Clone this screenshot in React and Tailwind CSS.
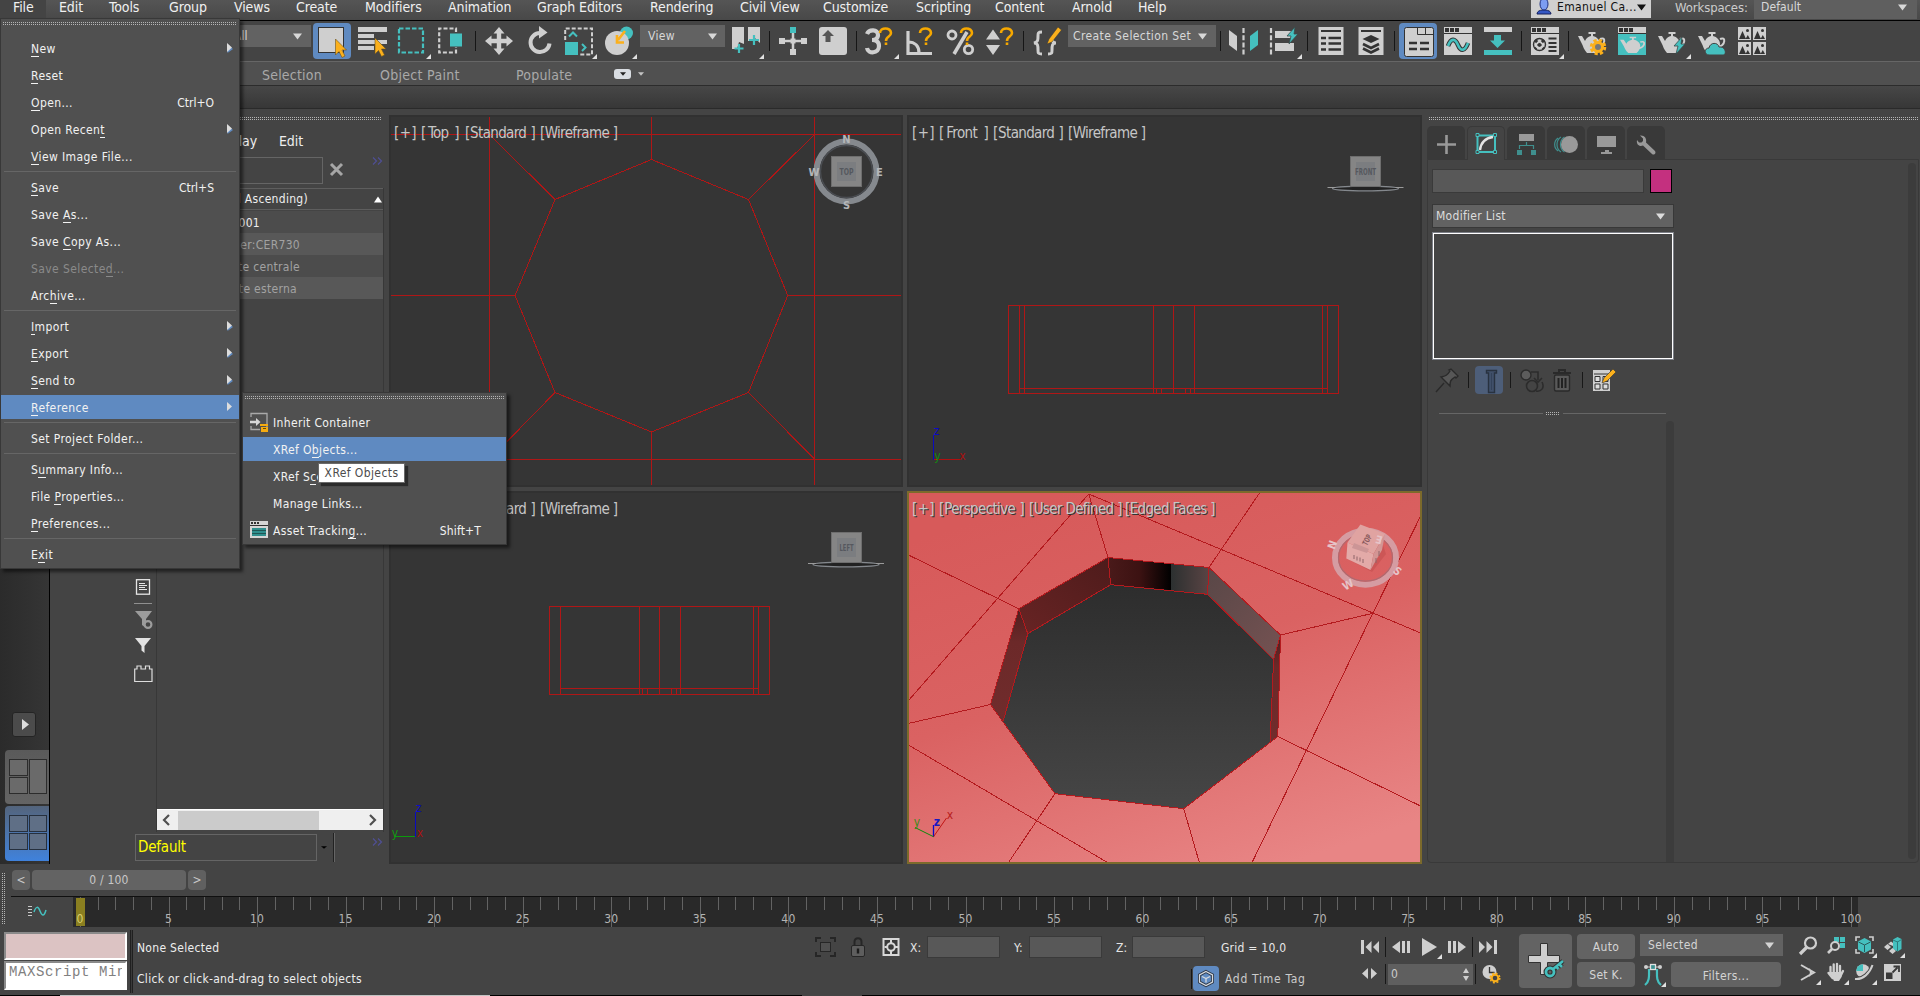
import React from "react";

const L = "#cfcfcf";
const T = "#45c0bf";
const O = "#fbb01c";
const D = "#333333";

/* ---------- small shared parts ---------- */

const Grip = ({ className = "" }) => (
  <div className={`flex shrink-0 flex-col gap-px ${className}`}>
    <div className="h-px bg-[repeating-linear-gradient(90deg,#b4b4b4_0_1px,transparent_1px_2px)]" />
    <div className="h-px bg-[repeating-linear-gradient(90deg,#b4b4b4_0_1px,transparent_1px_2px)]" />
  </div>
);

const Cell = ({ className = "", children }) => (
  <svg className={`block shrink-0 overflow-visible ${className}`} fill="none">
    {children}
  </svg>
);

const Down = ({ className = "", size = "h-[7px] w-[9px]" }) => (
  <svg className={`block shrink-0 ${size} ${className}`} viewBox="0 0 9 7" preserveAspectRatio="none">
    <path d="M0 .5h9L4.500 6.500z" fill="currentColor" />
  </svg>
);

const Sep = ({ className = "" }) => (
  <Cell className={`h-9 ${className}`}>
    <path d="M.5 8v20" stroke="#161616" />
  </Cell>
);

const Fly = ({ x, y }) => <path d={`M${x} ${y}v-5l-5 5z`} fill="#e0e0e0" />;

const Mn = ({ text }) => {
  const i = text.indexOf("&");
  if (i < 0) return <>{text}</>;
  return (
    <>
      {text.slice(0, i)}
      <span className="border-b border-current">{text[i + 1]}</span>
      {text.slice(i + 2)}
    </>
  );
};

/* ---------- menu bar ---------- */

const menuBar = [
  ["Edit", "w-[50px]"],
  ["Tools", "w-[60px]"],
  ["Group", "w-[65px]"],
  ["Views", "w-[62px]"],
  ["Create", "w-[69px]"],
  ["Modifiers", "w-[83px]"],
  ["Animation", "w-[89px]"],
  ["Graph Editors", "w-[113px]"],
  ["Rendering", "w-[90px]"],
  ["Civil View", "w-[83px]"],
  ["Customize", "w-[93px]"],
  ["Scripting", "w-[79px]"],
  ["Content", "w-[77px]"],
  ["Arnold", "w-[66px]"],
  ["Help", "w-[393px]"],
];

const MenuBar = () => (
  <div className="flex h-[21px] shrink-0 overflow-hidden border-b border-black bg-linear-to-b from-[#555555] to-[#484848] text-[14px] leading-[14px] tracking-[-0.1px] text-[#f0f0f0]">
    <div className="h-[19px] w-[46px] bg-[#444444] pl-[13px]">File</div>
    <div className="w-[13px]" />
    {menuBar.map(([t, w]) => (
      <div key={t} className={`shrink-0 whitespace-nowrap ${w}`}>
        {t}
      </div>
    ))}
    <div className="flex h-[18px] w-[120px] shrink-0 bg-[#d0d0d0] pl-[5px] text-[12px] leading-[15px] tracking-[0.35px] text-[#111111]">
      <Cell className="h-[18px] w-[21px]">
        <path d="M1 14c0-3 3-3.500 5-4h4c2 .5 5 1 5 4z" fill="#3457c4" stroke="#14205c" />
        <ellipse cx="8" cy="4" rx="4" ry="6" fill="#7c9df2" stroke="#1c2f80" />
      </Cell>
      <span className="w-[80px] whitespace-nowrap">Emanuel Ca...</span>
      <Down className="mt-[4px]" />
    </div>
    <div className="w-[79px] shrink-0 pl-[24px] text-[13px] leading-[15px] tracking-[-0.1px] text-[#cccccc]">
      <span className="whitespace-nowrap">Workspaces:</span>
    </div>
    <div className="ml-[24px] flex h-[19px] w-[163px] shrink-0 justify-between bg-[#5f5f5f] pr-[10px] pl-[7px] text-[12px] leading-[15px] tracking-[0.1px] text-[#d8d8d8]">
      Default
      <Down className="mt-[4px]" />
    </div>
  </div>
);

/* ---------- main toolbar ---------- */

const Question = ({ x, y }) => (
  <g transform={`translate(${x} ${y})`} stroke="#f6a800" strokeWidth="2.600">
    <path d="M2 6c0-6 11-6 11 0 0 4-5 3-5 8" />
    <path d="M8 15.500v2.500" />
  </g>
);

const Cursor = ({ x, y }) => (
  <path
    transform={`translate(${x} ${y})`}
    d="M0 0l11 11H6.500l3 6-3 1.500-3-6L0 16z"
    fill={O}
    stroke="#6a5320"
    strokeWidth=".6"
  />
);

const Teapot = ({ fill = L }) => (
  <>
    <path d="M22 13c6-3 6 6-2 8" stroke={fill} strokeWidth="2" />
    <path
      d="M0 10h4l3 5c1-3 4-4.500 6-5V8h-2.500V6h7v2H15v2c4 1 7 4 7 8 0 4-2 7-4 9H9c-3-3-4-7-5-9z"
      fill={fill}
    />
  </>
);

const Bolt = ({ x, y }) => (
  <path
    transform={`translate(${x} ${y})`}
    d="M8 0L0 9h4L2 17l9-10H7z"
    fill={T}
    stroke="#3a4a4a"
    strokeWidth=".8"
  />
);

const MainToolbar = () => (
  <div className="flex h-[41px] shrink-0 overflow-hidden border-b border-[#666666] bg-[#444444] pt-[2px] pl-[190px]">
    <div className="mt-[2px] flex h-[22px] w-[121px] shrink-0 items-center justify-between bg-[#626262] pr-[9px] pl-[44px] text-[12px] text-[#d8d8d8]">
      All
      <Down />
    </div>
    <div className="ml-[2px] h-9 w-[38px] shrink-0 rounded-[4px] bg-[#5f8ac1]">
      <Cell className="h-9 w-[38px]">
        <rect x="5.500" y="4.500" width="25" height="25" fill={L} stroke={D} />
        <Cursor x={22.500} y={16} />
      </Cell>
    </div>
    <Cell className="ml-[6px] h-9 w-[40px]">
      <path d="M1 4h29v5H1zM1 11h16v4H1zM1 17h29v4H1zM1 23h16v4H1z" fill={L} />
      <Cursor x={18} y={15} />
    </Cell>
    <Cell className="h-9 w-[40px]">
      <rect x="2" y="5.500" width="24" height="24" stroke={T} strokeWidth="2.200" strokeDasharray="4.500 2" />
      <Fly x={34} y={36} />
    </Cell>
    <Cell className="h-9 w-[38px]">
      <path d="M19 9V5.500H2.200v24H19V24" stroke={L} strokeWidth="2.200" strokeDasharray="4 2" />
      <rect x="13" y="10.500" width="12" height="13" fill={T} />
    </Cell>
    <Sep className="w-[10px]" />
    <Cell className="h-9 w-[41px]">
      <path
        d="M14 4l5.500 6.500h-3.300v5.300H21.500V12.500L28 18l-6.500 5.500v-3.300h-5.300v5.300h3.300L14 32l-5.500-6.500h3.300v-5.300H6.500v3.300L0 18l6.500-5.500v3.300h5.300v-5.300H8.500z"
        fill={L}
      />
    </Cell>
    <Cell className="h-9 w-[38px]">
      <path d="M14 10a9.500 9.500 0 1 0 9.500 10.500" stroke={L} strokeWidth="4" />
      <path d="M13 3l8.500 6.500-8.500 6z" fill={L} />
    </Cell>
    <Cell className="h-9 w-[40px]">
      <path d="M1.200 17V5.500H28v26H16" stroke={L} strokeWidth="2" strokeDasharray="4 2" />
      <rect x="1" y="19" width="13" height="13" fill={T} />
      <path d="M5 13.500l4-4 4 4M18 21l3.500 3.500L18 28" stroke={T} strokeWidth="2" />
      <Fly x={33} y={36} />
    </Cell>
    <Cell className="h-9 w-[36px]">
      <circle cx="22.500" cy="10" r="6.500" fill={T} />
      <circle cx="13" cy="20" r="12" fill={L} />
      <path d="M21 8l-7 9M13 12v7.500h7" stroke={O} strokeWidth="2.600" />
      <Fly x={33} y={36} />
    </Cell>
    <div className="mt-[2px] flex h-[22px] w-[85px] shrink-0 items-center justify-between bg-[#626262] pr-[8px] pl-[8px] text-[12px] tracking-[0.3px] text-[#d8d8d8]">
      View
      <Down />
    </div>
    <Cell className="ml-[6px] h-9 w-[38px]">
      <path d="M1 4h12v17l-5-2-2 7H1zM17 4h12v16l-6-6-2 4h-4z" fill={L} />
      <path d="M8 21v9M3.500 25.500h9M23 12v10M18 17h10" stroke={T} strokeWidth="2.200" />
      <Fly x={33} y={36} />
    </Cell>
    <Sep className="w-[10px]" />
    <Cell className="h-9 w-[39px]">
      <path d="M0 18h28M14 8v24" stroke={L} strokeWidth="2.500" />
      <path d="M0 15h6v6H0zM22 15h6v6h-6zM11 26h6v6h-6zM11.500 15.500h5v5h-5z" fill={L} />
      <rect x="11" y="4" width="6" height="6" fill={T} />
    </Cell>
    <Cell className="h-9 w-[38px]">
      <rect x="1" y="4" width="28" height="28" rx="3" fill={L} />
      <path d="M10 7l6 6h-3.500v6h-5v-6H4z" fill="#555555" />
    </Cell>
    <Sep className="w-[9px]" />
    <Cell className="h-9 w-[40px]">
      <path d="M2 11c2-5 11-5 11 1 0 4-4 5-6 5 3 0 7 1 7 6 0 8-11 8-12 2" stroke={L} strokeWidth="4.200" />
      <Question x={13} y={4} />
      <Fly x={34} y={36} />
    </Cell>
    <Cell className="h-9 w-[41px]">
      <path d="M3 8v22.500h24M3 19c7 0 11 4 11 11" stroke={L} strokeWidth="3.200" />
      <Question x={13} y={4} />
    </Cell>
    <Cell className="h-9 w-[40px]">
      <circle cx="6" cy="12" r="4" stroke={L} strokeWidth="2.800" />
      <circle cx="22.500" cy="26.500" r="4.200" stroke={L} strokeWidth="2.800" />
      <path d="M21 9L8 31" stroke={L} strokeWidth="3.500" />
      <Question x={13} y={4} />
    </Cell>
    <Cell className="h-9 w-[37px]">
      <path d="M7 6.500l7 10H0zM0 22h14L7 32z" fill={L} />
      <Question x={13} y={4} />
    </Cell>
    <Sep className="w-[10px]" />
    <Cell className="h-9 w-[35px]">
      <path
        d="M9 9c-4 0-4 1-4 4 0 4 0 6-4 7 4 0 4 3 4 7 0 3 0 4 4 4M15 31c4 0 4-1 4-4 0-4 0-7 4-7-4 0-4-3-4-5"
        stroke={L}
        strokeWidth="3"
      />
      <path d="M14 21l2-5L25 4l3.500 3L19 19z" fill={O} stroke={D} strokeWidth=".5" />
    </Cell>
    <div className="mt-[2px] flex h-[22px] w-[148px] shrink-0 items-center justify-between bg-[#626262] pr-[9px] pl-[5px] text-[12px] tracking-[0.4px] text-[#d8d8d8]">
      <span className="whitespace-nowrap">Create Selection Set</span>
      <Down />
    </div>
    <Sep className="ml-[4px] w-[9px]" />
    <Cell className="h-9 w-[41px]">
      <path d="M0 7l8 6v15l-8-6z" fill={L} />
      <path d="M14.500 5v27" stroke={L} strokeWidth="2.200" strokeDasharray="5 2.200" />
      <path d="M29 7l-8 6v15l8-6z" fill={T} />
    </Cell>
    <Cell className="h-9 w-[37px]">
      <path d="M1 5v27" stroke={L} strokeWidth="2.200" strokeDasharray="5 2.200" />
      <path d="M5 8h18v7H5zM5 20h19v8H5z" fill={L} />
      <Bolt x={17} y={4} />
      <Fly x={32} y={36} />
    </Cell>
    <Sep className="w-[11px]" />
    <Cell className="h-9 w-[40px]">
      <rect x=".5" y="4" width="25" height="28" fill={L} />
      <path d="M3 8h20" stroke={D} strokeWidth="2" />
      <path d="M3 15h5M3 20.500h5M3 26.500h5M10.500 15H23M10.500 20.500H23M10.500 26.500H23" stroke={D} strokeWidth="2.600" />
    </Cell>
    <Cell className="h-9 w-[36px]">
      <rect x=".5" y="4" width="25" height="28" fill={L} />
      <path d="M3 8h20" stroke={D} strokeWidth="2" />
      <path d="M13 12l8.500 4-8.500 4-8.500-4z" fill={D} />
      <path d="M5 21l8 4 8-4M5 25.500l8 4 8-4" stroke={D} strokeWidth="2.600" />
    </Cell>
    <Sep className="w-[5px]" />
    <div className="h-9 w-[38px] shrink-0 rounded-[4px] bg-[#5f8ac1]">
      <Cell className="h-9 w-[38px]">
        <rect x="5.500" y="4.500" width="29" height="29" rx="2" fill={L} stroke={D} />
        <path d="M18.500 5v6.500h16M26.500 5v6" stroke={D} />
        <path d="M10 20h8M21 20h9M10 26h8M21 26h9" stroke={D} strokeWidth="2.600" />
      </Cell>
    </div>
    <Cell className="ml-[7px] h-9 w-[39px]">
      <rect x="0" y="4" width="28" height="28" fill={L} />
      <path d="M1 5h4v4H1zM6 5h4v4H6zM11 5h4v4h-4z" fill={D} />
      <path d="M0 10.500h28" stroke={D} />
      <path d="M4 23c3-8 7-8 10-1s7 6 10-2" stroke={D} strokeWidth="4.600" />
      <path d="M4 23c3-8 7-8 10-1s7 6 10-2" stroke={T} strokeWidth="2.600" />
    </Cell>
    <Cell className="h-9 w-[38px]">
      <rect x="1" y="4" width="28" height="5" fill={L} />
      <path d="M11 12h7v5.500h4L14.500 25 7 17.500h4z" fill={T} />
      <rect x="1" y="27" width="28" height="5" fill={T} />
    </Cell>
    <Sep className="w-[10px]" />
    <Cell className="h-9 w-[37px]">
      <rect x="0" y="4" width="28" height="28" fill={L} />
      <path d="M1 5h4v4H1zM6 5h4v4H6zM11 5h4v4h-4z" fill={D} />
      <path d="M0 10.500h28" stroke={D} />
      <circle cx="8.500" cy="21.500" r="6" fill={L} stroke={D} strokeWidth="1.400" />
      <path d="M4 17l9 9M13 17l-9 9" stroke={D} strokeWidth="3" strokeDasharray="3 2.500" />
      <path d="M17.500 15.500h8M17.500 20h8M17.500 24h8M17.500 28h8" stroke={D} strokeWidth="2" />
      <Fly x={33} y={36} />
    </Cell>
    <Sep className="w-[10px]" />
    <Cell className="h-9 w-[40px]">
      <g transform="translate(0 3)">
        <Teapot />
      </g>
      <circle cx="20" cy="24" r="6.500" stroke={O} strokeWidth="3.500" strokeDasharray="3 2.100" />
      <circle cx="20" cy="24" r="4.500" stroke={O} strokeWidth="3" fill="#777777" />
    </Cell>
    <Cell className="h-9 w-[40px]">
      <rect x="0" y="4" width="28" height="28" fill={T} />
      <rect x="0" y="4" width="28" height="6" fill={L} />
      <path d="M1 5h4v4H1zM6 5h4v4H6zM11 5h4v4h-4z" fill={D} />
      <path d="M0 10.500h28" stroke={D} />
      <g transform="translate(2 9) scale(.92 .78)">
        <Teapot />
      </g>
    </Cell>
    <Cell className="h-9 w-[40px]">
      <g transform="translate(0 3)">
        <Teapot />
      </g>
      <Bolt x={16} y={14} />
      <Fly x={33} y={36} />
    </Cell>
    <Cell className="h-9 w-[40px]">
      <g transform="translate(0 3)">
        <Teapot />
      </g>
      <path d="M11 32c-5 0-5-7 0-7 1-6 9-6 10-1 7-1 8 8 4 8z" fill={T} stroke="#444444" />
    </Cell>
    <Cell className="h-9 w-[30px]">
      {[0, 15].map((x) =>
        [4, 19].map((y) => (
          <g key={`${x}-${y}`} transform={`translate(${x} ${y})`}>
            <rect width="13" height="13" fill={L} />
            <path d="M1 12l3.500-8 3.500 8zM7.500 12l2.300-4L12 12z" fill={D} />
            <circle cx="9.500" cy="3.500" r="1.500" fill={D} />
          </g>
        ))
      )}
    </Cell>
  </div>
);

/* ---------- ribbon ---------- */

const Ribbon = () => (
  <>
    <div className="flex h-[24px] shrink-0 items-center border-b border-[#2c2c2c] bg-[#505050] pl-[262px] text-[14px] text-[#a9a9a9]">
      <div className="w-[118px] pt-[3px] tracking-[0.2px]">Selection</div>
      <div className="w-[136px] pt-[3px] tracking-[0.3px]">Object Paint</div>
      <div className="w-[98px] pt-[3px] tracking-[0.2px]">Populate</div>
      <div className="flex h-[10px] w-[17px] items-center justify-center rounded-[3px] bg-[#d9dde2] text-[#222222]">
        <Down size="h-[4px] w-[6px]" />
      </div>
      <Down size="h-[4px] w-[6px]" className="ml-[7px] text-[#c4c4c4]" />
    </div>
    <div className="h-[23px] shrink-0 border-b border-[#2a2a2a] bg-linear-to-b from-[#474747] to-[#373737]" />
  </>
);

/* ---------- left side ---------- */

const LayoutTabs = () => (
  <div className="flex w-[50px] shrink-0 flex-col justify-end border-r border-black bg-linear-to-r from-[#2b2b2b] to-[#353535] pb-[3px]">
    <div className="mb-[13px] ml-[12px] flex h-[25px] w-[24px] items-center justify-center rounded-[3px] border border-[#242424] bg-[#4b4b4b] pl-[2px]">
      <svg className="h-[11px] w-[7px]" viewBox="0 0 7 11">
        <path d="M0 0l7 5.500L0 11z" fill="#dddddd" />
      </svg>
    </div>
    <div className="ml-[5px] h-[54px] rounded-l-[4px] bg-linear-to-b from-[#5a5a5a] to-[#646464]">
      <Cell className="h-[54px] w-[44px]">
        <g stroke="#2c2c2c" fill="#6a6a6a">
          <rect x="4.500" y="9.500" width="18" height="16" />
          <rect x="4.500" y="27.500" width="18" height="16" />
          <rect x="24.500" y="9.500" width="17" height="34" />
        </g>
      </Cell>
    </div>
    <div className="mt-[2px] ml-[5px] h-[55px] rounded-l-[4px] bg-linear-to-b from-[#53647c] to-[#3f82dc]">
      <Cell className="h-[54px] w-[44px]">
        <g stroke="#26303e" fill="#5f6f86">
          <rect x="4.500" y="9.500" width="18" height="16" />
          <rect x="4.500" y="27.500" width="18" height="16" />
          <rect x="24.500" y="9.500" width="17" height="16" />
          <rect x="24.500" y="27.500" width="17" height="16" />
        </g>
      </Cell>
    </div>
  </div>
);

const More = ({ className = "" }) => (
  <svg className={`block h-[8px] w-[11px] shrink-0 ${className}`} viewBox="0 0 11 8" fill="none">
    <path d="M1 .5L4.500 4 1 7.500M6 .5L9.500 4 6 7.500" stroke="#4f4f94" strokeWidth="1.200" />
  </svg>
);

const SceneExplorer = () => (
  <div className="flex w-[339px] shrink-0 flex-col pl-[80px]">
    <Grip className="mt-[8px] w-[252px]" />
    <div className="flex h-[37px] items-center pt-[5px] text-[14px] tracking-[-0.1px] text-[#eeeeee]">
      <div className="w-[127px] text-right">Display</div>
      <div className="ml-[22px]">Edit</div>
    </div>
    <div className="flex h-[27px] shrink-0">
      <div className="w-[193px] border border-[#656565]" />
      <Cell className="ml-[7px] h-[27px] w-[42px]">
        <path d="M1 7l11 11M12 7L1 18" stroke="#a6a6a6" strokeWidth="3" />
      </Cell>
      <More />
    </div>
    <div className="mt-[4px] flex h-[644px] shrink-0">
      <div className="w-[27px] shrink-0 border-r border-[#383838] pt-[391px] pl-[5px]">
        <Cell className="h-[108px] w-[20px]">
          <rect x="1.500" y=".7" width="13" height="14.500" stroke="#e6e6e6" strokeWidth="1.300" />
          <path d="M4 4.500h6M4 6.500h8M4 8.500h6M4 10.500h8" stroke="#e6e6e6" />
          <path d="M-1 24.500h18" stroke="#8f8f8f" />
          <path d="M0 32h17l-6 8v9l-4-3v-6z" fill="#9c9c9c" />
          <circle cx="13" cy="45.500" r="3.400" fill="#444444" stroke="#9c9c9c" strokeWidth="2.200" />
          <path d="M0 59h16l-6.500 8v7l-3-2.500V67z" fill="#e2e2e2" />
          <path d="M-.3 102.500V90H2v-3h4v3h4.500v-3h4v3H17v12.500z" stroke="#dddddd" strokeWidth="1.200" />
        </Cell>
      </div>
      <div className="flex w-[227px] flex-col border-r border-[#383838] text-[12px] tracking-[0.3px]">
        <div className="mb-px flex h-[22px] shrink-0 items-center justify-between border-y border-[#5e5e5e] text-[#eeeeee]">
          <div className="w-[151px] text-right whitespace-nowrap">Name (Sorted Ascending)</div>
          <Down size="h-[7px] w-[8px]" className="mr-[1px] rotate-180 text-white" />
        </div>
        <div className="h-[22px] bg-[#4c4c4c] leading-[24px] text-[#eeeeee]">
          <div className="w-[103px] text-right">Plane001</div>
        </div>
        <div className="h-[22px] bg-[#585858] leading-[24px] text-[#a2a2a2]">
          <div className="w-[143px] text-right">Layer:CER730</div>
        </div>
        <div className="h-[22px] bg-[#4c4c4c] leading-[24px] text-[#a2a2a2]">
          <div className="w-[143px] text-right">parte centrale</div>
        </div>
        <div className="h-[22px] bg-[#585858] leading-[24px] text-[#a2a2a2]">
          <div className="w-[140px] text-right">parte esterna</div>
        </div>
        <div className="grow" />
        <div className="mb-[2px] flex h-[21px] shrink-0 items-center border-t border-white bg-[#efefef]">
          <Cell className="h-[20px] w-[21px]">
            <path d="M12 5l-5 5 5 5" stroke="#505050" strokeWidth="2.200" />
          </Cell>
          <div className="h-[19px] w-[141px] bg-[#cbcbcb]" />
          <Cell className="ml-[49px] h-[20px] w-[15px]">
            <path d="M2 5l5 5-5 5" stroke="#505050" strokeWidth="2.200" />
          </Cell>
        </div>
      </div>
    </div>
    <div className="flex h-[32px] pt-[2px] pl-[5px]">
      <div className="h-[27px] w-[182px] border border-[#656565] pl-[2px] text-[15px] leading-[25px] tracking-[-0.2px] text-[#ffff00]">
        Default
      </div>
      <Down size="h-[3px] w-[6px]" className="mt-[12px] ml-[4px] text-black" />
      <div className="-mt-px ml-[6px] h-[29px] w-[2px] border-l border-[#222222] bg-[#666666]" />
      <More className="mt-[4px] ml-[37px]" />
    </div>
  </div>
);

/* ---------- viewports ---------- */

const RED = "#b01616";

const VpLabel = ({ parts, className = "" }) => (
  <div
    className={`absolute top-[9px] flex whitespace-pre text-[15px] leading-[18px] tracking-[-0.65px] text-[#c6c6c6] ${className}`}
  >
    {parts.map(([t, w]) => (
      <span key={t} className={`flex shrink-0 justify-between ${w}`}>
        <span>[</span>
        <span>{t}</span>
        <span>]</span>
      </span>
    ))}
  </div>
);

const CubeFace = ({ x, y, label, size = 8 }) => (
  <>
    <rect x={x + 0.5} y={y + 0.5} width="30" height="30" fill="#858585" stroke="#6e6e6e" />
    <rect x={x + 6} y={y + 6} width="19" height="19" fill="#7b7d80" />
    <text
      x={x + 15.5}
      y={y + 18.5}
      fontSize={size}
      fontWeight="bold"
      fill="#55585e"
      textAnchor="middle"
      textLength={label === "FRONT" ? 21 : 14}
      lengthAdjust="spacingAndGlyphs"
    >
      {label}
    </text>
  </>
);

const FlatRing = ({ cx, cy }) => (
  <>
    <ellipse cx={cx} cy={cy} rx="33" ry="2.300" stroke="#84888d" strokeWidth="1.300" fill="#222222" />
    <path d={`M${cx - 38} ${cy - 1}h8M${cx + 30} ${cy - 1}h8`} stroke="#9a9a9a" />
  </>
);

const TopView = () => (
  <svg className="block h-[372px] w-[514px]" viewBox="389 115 514 372" fill="none">
    <rect x="391" y="117" width="510" height="368" fill="#353535" />
    <g stroke={RED} shapeRendering="crispEdges">
      <path d="M391 134.500h510M391 295.500h124M788 295.500h113M391 459.500h510M489.500 117v368M814.500 117v368M651.500 117v42M651.500 432v53" />
      <path d="M651.500 159.500L748.500 199.500 787.700 295.500 748.500 392.500 651.500 432 555 392.500 515 295.500 555 199.500z" />
      <path d="M490 135L555 199.500M814.500 134.500L748.500 199.500M748.500 392.500L814.500 459M555 392.500L489.500 459.500" />
    </g>
    <circle cx="846.500" cy="171.500" r="30" stroke="#85898e" strokeWidth="6" />
    <circle cx="846.500" cy="171.500" r="26" stroke="#4a4d52" strokeWidth="1.400" />
    <CubeFace x={831} y={156} label="TOP" />
    <g fontSize="11" fontWeight="bold" fill="#b4b6b8" textAnchor="middle">
      <text x="846.500" y="143">N</text>
      <text x="846.500" y="209">S</text>
      <text x="814" y="176">W</text>
      <text x="879.500" y="176">E</text>
    </g>
  </svg>
);

const FrontView = () => (
  <svg className="block h-[372px] w-[515px]" viewBox="907 115 515 372" fill="none">
    <rect x="909" y="117" width="511" height="368" fill="#353535" />
    <g stroke={RED} shapeRendering="crispEdges">
      <rect x="1008.500" y="305.500" width="330" height="88" />
      <path d="M1019.500 305v88M1024.500 305v88M1153.500 305v88M1173.500 305v88M1194.500 305v88M1322.500 305v88M1327.500 305v88M1019 388.500h309M1156.500 388v5M1161.500 388v5M1185.500 388v5M1190.500 388v5" />
    </g>
    <FlatRing cx={1365.500} cy={188.500} />
    <CubeFace x={1350} y={156} label="FRONT" />
    <path d="M933.500 460v-25" stroke="#0a0ac0" />
    <path d="M934 459.500h26" stroke="#b01010" />
    <g fontSize="12" textAnchor="middle">
      <text x="936.500" y="435" fill="#0a0ac8">z</text>
      <text x="937.500" y="460" fill="#128a12">y</text>
      <text x="962.500" y="460" fill="#a81010">x</text>
    </g>
  </svg>
);

const LeftView = () => (
  <svg className="block h-[373px] w-[514px]" viewBox="389 491 514 373" fill="none">
    <rect x="391" y="493" width="510" height="369" fill="#353535" />
    <g stroke={RED} shapeRendering="crispEdges">
      <rect x="549.500" y="606.500" width="220" height="88" />
      <path d="M560.500 606v88M639.500 606v88M659.500 606v88M680.500 606v88M753.500 606v88M758.500 606v88M560 688.500h199M642.500 688v6M647.500 688v6M671.500 688v6M676.500 688v6" />
    </g>
    <FlatRing cx={846} cy={564.500} />
    <CubeFace x={831} y={532} label="LEFT" />
    <path d="M415.500 837v-25" stroke="#0a0ac0" />
    <path d="M394 836.500h21" stroke="#0c9a0c" />
    <g fontSize="12" textAnchor="middle">
      <text x="418.500" y="812" fill="#0a0ac8">z</text>
      <text x="395" y="837" fill="#129a12">y</text>
      <text x="420" y="837" fill="#a81010">x</text>
    </g>
  </svg>
);

const PerspectiveView = () => (
  <svg className="block h-[373px] w-[515px]" viewBox="907 491 515 373" fill="none">
    <defs>
      <linearGradient id="skin" x1=".3" y1="0" x2=".75" y2="1">
        <stop offset="0" stopColor="#d75a5a" />
        <stop offset=".45" stopColor="#da6262" />
        <stop offset="1" stopColor="#e88585" />
      </linearGradient>
      <linearGradient id="hole" x1="0" y1="0" x2="0" y2="1">
        <stop offset="0" stopColor="#2a2a2a" />
        <stop offset="1" stopColor="#464646" />
      </linearGradient>
      <linearGradient id="dark" x1="0" y1="0" x2="1" y2="0">
        <stop offset="0" stopColor="#4a1a1a" />
        <stop offset=".5" stopColor="#3c1212" />
        <stop offset="1" stopColor="#000000" />
      </linearGradient>
      <linearGradient id="grey" x1="0" y1="0" x2="1" y2="0">
        <stop offset="0" stopColor="#2c3030" />
        <stop offset="1" stopColor="#5a4444" />
      </linearGradient>
      <linearGradient id="greyRight" x1="0" y1="0" x2="1" y2="1">
        <stop offset="0" stopColor="#594747" />
        <stop offset="1" stopColor="#755252" />
      </linearGradient>
      <linearGradient id="wine" x1="0" y1="1" x2="1" y2="0">
        <stop offset="0" stopColor="#682424" />
        <stop offset="1" stopColor="#4e1b1b" />
      </linearGradient>
      <linearGradient id="wineLow" x1="0" y1="0" x2="0" y2="1">
        <stop offset="0" stopColor="#4f1e1e" />
        <stop offset=".3" stopColor="#6c2929" />
        <stop offset="1" stopColor="#702c2c" />
      </linearGradient>
    </defs>
    <rect x="907" y="491" width="515" height="373" fill="#7c6a2b" />
    <rect x="909" y="493" width="511" height="369" fill="url(#skin)" />
    <path
      d="M1108 557.500L1209 567.500 1280.500 635 1277.800 736.500 1183.700 808.700 1055 793.700 990.500 704.500 1018.800 608.700z"
      fill="url(#hole)"
    />
    <path d="M1108 557.500L1171 563.700V590.300L1110.700 584.700z" fill="url(#dark)" />
    <path d="M1171 563.700L1209 567.500 1207.500 594.300 1171 590.300z" fill="url(#grey)" />
    <path d="M1209 567.500L1280.500 635 1273.600 659.300 1207.500 594.300z" fill="url(#greyRight)" />
    <path d="M1280.500 635L1277.800 736.500 1270.200 741 1273.600 659.300z" fill="url(#wineLow)" />
    <path d="M1108 557.500L1110.700 584.700 1027.800 633.700 1018.800 608.700z" fill="url(#wine)" />
    <path d="M1018.800 608.700L1027.800 633.700 1003.300 720.700 990.500 704.500z" fill="url(#wineLow)" />
    <g stroke="#b41a1e" shapeRendering="crispEdges">
      <path d="M1108 557.500L1209 567.500 1280.500 635 1277.800 736.500 1183.700 808.700 1055 793.700 990.500 704.500 1018.800 608.700z" />
      <path d="M1003.300 720.700L1027.800 633.700 1110.700 584.700 1207.500 594.300 1273.600 659.300 1270.200 741" />
      <path d="M1108 557.500L1110.700 584.700M1209 567.500L1207.500 594.300M1280.500 635L1273.600 659.300M1018.800 608.700L1027.800 633.700" />
      <path d="M1088.700 494L1108 557.500M1088.700 494L909 700M1088.700 494L1420 632.700M1018.800 608.700L909 555.300M990.500 704.500L909 723.300M909 745.300L1106.600 862M1055 793.700L1008.800 862M1183.700 808.700L1199.200 862M1277.800 736.500L1420 805.700M1280.500 635L1372.800 613.300M1420 517.300L1372.800 613.300 1252.300 862M1209 567.500L1259.500 493" />
    </g>
    <ellipse cx="1365.500" cy="557.700" rx="30.500" ry="27" stroke="#d59ca2" strokeWidth="6" />
    <ellipse cx="1365.500" cy="557.700" rx="27" ry="23.500" stroke="#b0696f" strokeWidth="1.200" />
    <path d="M1350 560l22 12 14-18-4-12z" fill="#c04c4c" opacity=".5" />
    <path d="M1360.400 524.500L1385 534 1373.500 554 1347.500 542.500z" fill="#e0a3a1" />
    <path d="M1347.500 542.500L1373.500 554 1370.500 570 1346.300 558.500z" fill="#e3aaa8" />
    <path d="M1385 534L1382 550 1370.500 570 1373.500 554z" fill="#d39594" />
    <path d="M1354 543l15 6-2 4-15-5z" fill="#cc9596" />
    <text
      transform="translate(1367 546) rotate(-62)"
      fontSize="8"
      fontWeight="bold"
      fill="#8a5a5e"
      textLength="11"
      lengthAdjust="spacingAndGlyphs"
    >
      TOP
    </text>
    <path d="M1354 555v4M1357 556.500v4M1360 557.500v4M1363 559v4M1376 558v5M1379 551v5" stroke="#8f6468" />
    <g fontSize="11" fontWeight="bold" fill="#e6c4c8" textAnchor="middle">
      <text transform="translate(1336 546) rotate(-70)">N</text>
      <text transform="translate(1380 536) rotate(-165)">E</text>
      <text transform="translate(1350 588) rotate(-30)">W</text>
      <text transform="translate(1395 574) rotate(40)">S</text>
    </g>
    <path d="M933.500 837v-12" stroke="#0a0ac8" strokeWidth="1.300" />
    <path d="M933.500 836.700L946.500 818" stroke="#c01414" />
    <path d="M933.500 836.700L915 827.500" stroke="#0c8a0c" />
    <g fontSize="12" textAnchor="middle">
      <text x="950" y="818.500" fill="#b81c1c">x</text>
      <text x="937" y="825.500" fill="#1818c0" fontWeight="bold">z</text>
      <text x="917" y="825.500" fill="#3a8a1c">y</text>
    </g>
  </svg>
);

const Viewports = () => (
  <div className="grid w-[1033px] shrink-0 grid-cols-[514px_515px] gap-[4px] pt-[6px]">
    <div className="relative h-[372px] bg-[#313131]">
      <TopView />
      <VpLabel className="left-[5px]" parts={[["+", "w-[22px] mr-[5px]"], ["Top ", "w-[38px] mr-[6px]"], ["Standard ", "w-[70px] mr-[5px]"], ["Wireframe ", "w-[77px]"]]} />
    </div>
    <div className="relative h-[372px] bg-[#313131]">
      <FrontView />
      <VpLabel className="left-[5px]" parts={[["+", "w-[22px] mr-[5px]"], ["Front ", "w-[49px] mr-[5px]"], ["Standard ", "w-[70px] mr-[5px]"], ["Wireframe ", "w-[77px]"]]} />
    </div>
    <div className="relative h-[373px] bg-[#313131]">
      <LeftView />
      <VpLabel className="left-[5px]" parts={[["+", "w-[22px] mr-[5px]"], ["Left ", "w-[38px] mr-[6px]"], ["Standard ", "w-[70px] mr-[5px]"], ["Wireframe ", "w-[77px]"]]} />
    </div>
    <div className="relative h-[373px]">
      <PerspectiveView />
      <VpLabel className="left-[5px] [text-shadow:1px_1px_0_#333333]" parts={[["+", "w-[22px] mr-[5px]"], ["Perspective ", "w-[85px] mr-[5px]"], ["User Defined ", "w-[91px] mr-[5px]"], ["Edged Faces ", "w-[90px]"]]} />
    </div>
  </div>
);

/* ---------- command panel ---------- */

const tabIcons = [
  <path key="a" d="M19.500 9v19M10 18.500h19" stroke="#999999" strokeWidth="2.600" />,
  <g key="b">
    <path d="M12 9.500h14M12 26h14M10.500 11v14M28 11v14" stroke={T} strokeWidth="2" />
    <path d="M9 7.500h3v3H9zM26.500 7.500h3v3h-3zM9 24.500h3v3H9zM26.500 24.500h3v3h-3z" stroke={T} fill="#444444" />
    <path d="M13 24c1-8 6-12 13-13" stroke="#e4e4e4" strokeWidth="2.400" />
  </g>,
  <g key="c">
    <path d="M12 8h15v7H12z" fill="#999999" />
    <path d="M19.500 16v4M12.500 23v-3.500h14V23" stroke="#3f8f8e" strokeWidth="1.200" />
    <path d="M10 24h5v5h-5zM24 24h5v5h-5z" fill="#3f8f8e" />
  </g>,
  <g key="d">
    <path d="M14 11a9 9 0 0 0 0 15M17.500 11a9 9 0 0 0 0 15M11 12a8 8 0 0 0 0 13" stroke="#3f8f8e" strokeWidth="1.200" />
    <circle cx="22.500" cy="18.500" r="8.500" fill="#999999" />
  </g>,
  <path key="e" d="M10 10h19v11H10zM18 24h4v2h3v2H14v-2h4z" fill="#999999" />,
  <path
    key="f"
    d="M13 9.500l3 3v2.500l-1.500 1.500h-2.500L10 14c-1 5 3 7 6 5.500l9 8.500c2 1.500 4.500-.5 3-3L19 16.500c1-4-1.500-7.500-6-7z"
    fill="#999999"
  />,
];

const CommandPanel = () => (
  <div className="flex grow flex-col pl-[5px]">
    <Grip className="mt-[8px] ml-[2px] w-[489px]" />
    <div className="mt-[6px] flex h-[34px] shrink-0 gap-[2px]">
      {tabIcons.map((icon, i) => (
        <div
          key={i}
          className={
            i === 1
              ? "z-10 h-[34px] w-[38px] rounded-t-[5px] border border-b-0 border-[#393939] bg-[#444444]"
              : "h-[33px] w-[38px] rounded-t-[5px] bg-[#393939]"
          }
        >
          <Cell className={i === 1 ? "-mt-px -ml-px h-[34px] w-[38px]" : "h-[34px] w-[38px]"}>{icon}</Cell>
        </div>
      ))}
    </div>
    <div className="-mt-px flex h-[704px] w-[492px] shrink-0 justify-between rounded-b-[4px] border border-[#393939] pl-[4px]">
      <div className="flex w-[243px] flex-col">
        <div className="mt-[9px] flex h-[24px] shrink-0 justify-between pr-[3px]">
          <div className="w-[212px] border border-[#3a3a3a] bg-[#585858]" />
          <div className="w-[22px] border border-black bg-[#c4307f]" />
        </div>
        <div className="mt-[11px] flex h-[24px] w-[242px] shrink-0 items-center justify-between border border-[#383838] bg-[#626262] pr-[8px] pl-[3px] text-[12px] tracking-[0.3px] text-[#dddddd]">
          Modifier List
          <Down />
        </div>
        <div className="mt-[4px] h-[128px] w-[242px] shrink-0 border border-[#7d8088] p-0">
          <div className="h-full border border-white" />
        </div>
        <div className="mt-[6px] flex h-[28px] shrink-0">
          <Cell className="h-[28px] w-[36px]">
            <path
              d="M4 26l8-9M9 11c4-1 6-1 9-6l-1-1 2-1 7 7-2 2-1-1c-5 3-5 5-5 9z"
              fill="#575757"
              stroke="#2a2a2a"
              strokeWidth="1.400"
            />
          </Cell>
          <Cell className="h-[28px] w-[7px]">
            <path d="M.5 6v16" stroke="#181818" />
          </Cell>
          <div className="h-[28px] w-[28px] shrink-0 rounded-[4px] bg-[#4d5e79]">
            <Cell className="h-[28px] w-[28px]">
              <path d="M11.500 4.500h10v2.500h-2v19.500h-6V7h-2z" stroke="#283240" fill="#40506a" strokeWidth="1.400" />
              <path d="M16.500 7v17" stroke="#33425a" />
            </Cell>
          </div>
          <Cell className="ml-[7px] h-[28px] w-[9px]">
            <path d="M.5 6v16" stroke="#181818" />
          </Cell>
          <Cell className="h-[28px] w-[33px]">
            <circle cx="7" cy="9" r="5" fill="#5c5c5c" stroke="#2c2c2c" strokeWidth="1.400" />
            <circle cx="13" cy="20" r="5.500" stroke="#2c2c2c" strokeWidth="1.600" />
            <path d="M12 6h7v8M15 12l4 4 4-4M23 16c3 6-1 10-6 9" stroke="#2c2c2c" strokeWidth="1.600" />
          </Cell>
          <Cell className="h-[28px] w-[30px]">
            <path d="M1 7h18M7 7V4h6v3" stroke="#2a2a2a" strokeWidth="2" />
            <rect x="2.500" y="9" width="15" height="16" rx="1.500" fill="#5a5a5a" stroke="#2a2a2a" strokeWidth="1.400" />
            <path d="M6.500 12v10M10 12v10M13.500 12v10" stroke="#222222" strokeWidth="2" />
          </Cell>
          <Cell className="h-[28px] w-[10px]">
            <path d="M.5 6v16" stroke="#181818" />
          </Cell>
          <Cell className="h-[28px] w-[24px]">
            <rect x="1" y="4" width="17" height="21" fill={L} />
            <path d="M2 8h15" stroke={D} />
            <path d="M3 10.500h5v5H3zM11 10.500h5v5h-5zM3 18h5v5H3zM11 18h5v5h-5z" stroke={D} fill="#dddddd" />
            <path d="M10 17l2-5 9-9 3 3-9 9z" fill={O} stroke={D} strokeWidth=".6" />
          </Cell>
        </div>
        <div className="mt-[17px] flex h-[5px] shrink-0 items-center pl-[7px]">
          <div className="h-px w-[104px] bg-[#666666]" />
          <Grip className="mx-[3px] w-[14px]" />
          <div className="h-px w-[103px] bg-[#666666]" />
        </div>
        <div className="mt-[5px] ml-[234px] w-[8px] grow rounded-t-[4px] bg-[#3c3c3c]" />
      </div>
      <div className="mt-[3px] mr-[2px] mb-[3px] w-[8px] rounded-[4px] bg-[#3c3c3c]" />
    </div>
  </div>
);

/* ---------- time line ---------- */

const TimeSlider = () => (
  <div className="flex h-[32px] shrink-0 gap-[2px] pt-[6px] pl-[12px] text-[12px] leading-[21px] tracking-[0.2px] text-[#c8c8c8]">
    <div className="h-[20px] w-[18px] rounded-[4px] bg-[#606060] text-center">&lt;</div>
    <div className="h-[20px] w-[154px] rounded-[4px] bg-[#636363] text-center">0 / 100</div>
    <div className="h-[20px] w-[18px] rounded-[4px] bg-[#606060] text-center">&gt;</div>
  </div>
);

const frames = Array.from({ length: 101 }, (_, i) => i);

const TrackBar = () => (
  <div className="flex h-[32px] shrink-0">
    <Cell className="h-[32px] w-[73px] border-t border-transparent">
      <path d="M11 -.5h62" stroke="#101010" />
      <path d="M28 9.500h4M28 12.500h4M28 15.500h4M28 18.500h4" stroke="#c8c8c8" />
      <path d="M34 15c2-6 4-6 6-1s4 6 6-1" stroke={T} strokeWidth="1.500" />
    </Cell>
    <svg className="block h-[32px] w-[1785px] overflow-visible" fill="none">
      <rect width="1785" height="31" fill="#292929" />
      <path d="M0 .5h1785" stroke="#101010" />
      {frames.map((f) => (
        <path
          key={f}
          d={`M${Math.round(7 + f * 17.71) + 0.5} 1v${f % 5 ? 13 : 30}`}
          stroke="#636363"
          shapeRendering="crispEdges"
        />
      ))}
      <rect x="3" y="2" width="9" height="28" fill="#8a7f20" />
      {frames
        .filter((f) => f % 5 === 0)
        .map((f) => (
          <text
            key={f}
            x={7 + f * 17.71}
            y="27"
            fontSize="12"
            letterSpacing=".2"
            textAnchor="middle"
            fill={f ? "#b4b4b4" : "#d8d070"}
          >
            {f}
          </text>
        ))}
    </svg>
    <div className="grow border-t border-[#101010]" />
  </div>
);

/* ---------- status bar ---------- */

const Field = ({ label, className, width }) => (
  <>
    <div className={`shrink-0 text-[#e4e4e4] ${className}`}>{label}</div>
    <div className={`h-[22px] shrink-0 border border-[#3a3a3a] bg-[#585858] ${width}`} />
  </>
);

const StatusBar = () => (
  <div className="flex h-[67px] shrink-0 text-[12px]">
    <div className="flex w-[127px] shrink-0 flex-col pt-[4px] pl-[4px]">
      <div className="h-[28px] border-2 border-t-[#8a8a8a] border-r-white border-b-white border-l-[#8a8a8a] bg-[#dcc3c3]" />
      <div className="mt-px h-[29px] overflow-hidden border-2 border-t-[#8a8a8a] border-r-white border-b-white border-l-[#8a8a8a] bg-white pl-[3px] font-['Liberation_Mono'] text-[14px] leading-[19px] tracking-[0.6px] whitespace-nowrap text-[#808080]">
        <div className="w-[113px] overflow-hidden">MAXScript Mini</div>
      </div>
    </div>
    <div className="mt-[2px] ml-[3px] h-[63px] w-[3px] shrink-0 border-x border-[#202020] bg-[#3a3a3a]" />
    <div className="flex w-[682px] shrink-0 flex-col pt-[9px] pl-[4px] leading-[22px] tracking-[0.3px] text-[#eeeeee]">
      <div>None Selected</div>
      <div className="mt-[9px]">Click or click-and-drag to select objects</div>
    </div>
    <div className="flex w-[546px] shrink-0 flex-col pt-[8px]">
      <div className="flex h-[22px] items-center">
        <Cell className="h-[22px] w-[36px]">
          <path d="M1 6V2h5M15 2h5v4M20 16v4h-5M6 20H1v-4" stroke="#262626" strokeWidth="2" />
          <rect x="5.500" y="6.500" width="10" height="9" fill="#505050" stroke="#262626" />
        </Cell>
        <Cell className="h-[22px] w-[31px]">
          <path d="M3.500 10V6c0-5 7-5 7 0v4" stroke="#262626" strokeWidth="2" />
          <rect x=".5" y="9.500" width="13" height="11" rx="1.500" fill="#5e5e5e" stroke="#262626" />
          <path d="M7 12.500v5" stroke="#1c1c1c" strokeWidth="2.400" />
        </Cell>
        <Cell className="h-[22px] w-[28px]">
          <rect x="1.500" y="3" width="15" height="16" fill="#3a3a3a" stroke="#d8d8d8" strokeWidth="2" />
          <circle cx="9" cy="11" r="3.800" stroke="#d8d8d8" strokeWidth="2" />
          <path d="M9 4v3.500M9 15v3M2.500 11H5M13 11h3" stroke="#d8d8d8" strokeWidth="2" />
        </Cell>
        <Field label="X:" className="w-[17px] pt-px" width="w-[73px]" />
        <Field label="Y:" className="ml-[14px] w-[15px] pt-px" width="w-[73px]" />
        <Field label="Z:" className="ml-[14px] w-[16px] pt-px" width="w-[73px]" />
        <div className="ml-[16px] pt-px tracking-[0.25px] whitespace-nowrap text-[#e8e8e8]">Grid = 10,0</div>
      </div>
      <div className="mt-[8px] flex h-[25px] items-center pl-[376px]">
        <div className="h-[20px] w-px bg-[#161616]" />
        <div className="ml-px h-[25px] w-[26px] rounded-[4px] bg-[#5f8ac1]">
          <Cell className="h-[25px] w-[26px]">
            <path d="M13 5.500l6.500 3.500v7L13 19.500 6.500 16V9z" stroke="#2b3442" strokeWidth="3" />
            <path d="M13 5.500l6.500 3.500v7L13 19.500 6.500 16V9zM9 10.500l4 2 4-2M13 12.500v4" stroke="#d5dae0" strokeWidth="1.300" />
          </Cell>
        </div>
        <div className="ml-[6px] tracking-[0.7px] whitespace-nowrap text-[#cccccc]">Add Time Tag</div>
      </div>
    </div>
    <div className="flex w-[158px] shrink-0 flex-col pt-[8px]">
      <div className="flex h-[22px]">
        <Cell className="h-[22px] w-[24px]">
          <path d="M0 4h3v14H0zM10.500 5v12L4.500 11zM18 5v12l-6-6z" fill={L} />
        </Cell>
        <Cell className="h-[22px] w-[7px]">
          <path d="M.5 1v20" stroke="#181818" />
        </Cell>
        <Cell className="h-[22px] w-[30px]">
          <path d="M8 5v12l-8-6zM10 5h3v12h-3zM15 5h3v12h-3z" fill={L} />
        </Cell>
        <Cell className="h-[22px] w-[26px]">
          <path d="M0 2l15 9-15 9z" fill={L} />
          <Fly x={20} y={23} />
        </Cell>
        <Cell className="h-[22px] w-[24px]">
          <path d="M10 5v12l8-6zM0 5h3v12H0zM5 5h3v12H5z" fill={L} />
        </Cell>
        <Cell className="h-[22px] w-[7px]">
          <path d="M.5 1v20" stroke="#181818" />
        </Cell>
        <Cell className="h-[22px] w-[20px]">
          <path d="M0 5v12l6-6zM7.500 5v12l6-6zM15 4h3v14h-3z" fill={L} />
        </Cell>
      </div>
      <div className="mt-[5px] flex h-[22px] items-center">
        <Cell className="h-[22px] w-[24px]">
          <path d="M7 5v11l-6-5.500zM10 5v11l6-5.500z" fill={L} />
        </Cell>
        <Cell className="h-[22px] w-[3px]">
          <path d="M.5 1v20" stroke="#181818" />
        </Cell>
        <div className="flex h-[21px] w-[85px] items-center justify-between bg-[#5f5f5f] pr-[4px] pl-[3px] text-[#cccccc]">
          0
          <svg className="h-[13px] w-[6px]" viewBox="0 0 6 13">
            <path d="M3 0l3 5H0zM0 8h6l-3 5z" fill={L} />
          </svg>
        </div>
        <Cell className="ml-[2px] h-[22px] w-[7px]">
          <path d="M.5 1v20" stroke="#181818" />
        </Cell>
        <Cell className="h-[22px] w-[20px]">
          <circle cx="7.500" cy="9" r="7" fill={L} />
          <path d="M7.500 4v5.500h5" stroke={D} strokeWidth="1.300" />
          <circle cx="13" cy="15" r="3.300" stroke={O} strokeWidth="2" fill="#444444" />
          <circle cx="13" cy="15" r="4.800" stroke={O} strokeWidth="1.500" strokeDasharray="2 1.770" />
        </Cell>
      </div>
    </div>
    <div className="mt-[6px] h-[54px] w-[53px] shrink-0 rounded-[4px] bg-[#636363]">
      <Cell className="h-[54px] w-[53px]">
        <path d="M21.500 9.500h7v12h12v7h-12v12h-7v-12h-12v-7h12z" fill={L} stroke={D} />
        <circle cx="31" cy="38" r="4" stroke={D} strokeWidth="5" />
        <path d="M33.500 35.500L44 27M40 30l3 3M37 32.500l2.500 2.500" stroke={D} strokeWidth="4.500" />
        <circle cx="31" cy="38" r="4" stroke={T} strokeWidth="2.800" />
        <path d="M33.500 35.500L44 27M40 30l3 3M37 32.500l2.500 2.500" stroke={T} strokeWidth="2.500" />
      </Cell>
    </div>
    <div className="mt-[6px] ml-[5px] flex w-[58px] shrink-0 flex-col gap-[3px] text-center leading-[27px] tracking-[0.3px] text-[#d4d4d4]">
      <div className="h-[25px] rounded-[4px] bg-[#636363]">Auto</div>
      <div className="h-[25px] rounded-[4px] bg-[#636363]">Set K.</div>
    </div>
    <div className="mt-[6px] ml-[5px] flex w-[143px] shrink-0 flex-col tracking-[0.4px] text-[#d4d4d4]">
      <div className="flex h-[22px] items-center justify-between bg-[#626262] pr-[9px] pl-[8px]">
        Selected
        <Down />
      </div>
      <div className="mt-[6px] flex h-[25px]">
        <Cell className="h-[25px] w-[31px]">
          <path d="M5 23c5-4 4-10 4-16M21 23c-5-4-4-10-4-16" stroke={T} strokeWidth="2.200" />
          <path d="M6 5h14" stroke={L} />
          <circle cx="6" cy="5" r="2" fill={L} />
          <circle cx="20" cy="5" r="2" fill={L} />
          <rect x="10.500" y="2.500" width="5" height="5" fill="#3a8f8f" stroke="#e0e0e0" strokeWidth="1.300" />
          <Fly x={26} y={25} />
        </Cell>
        <div className="h-[25px] w-[110px] rounded-[4px] bg-[#636363] text-center leading-[28px]">Filters...</div>
      </div>
    </div>
    <div className="grid h-[54px] shrink-0 grid-cols-[28px_28px_29px_30px] grid-rows-[27px_27px] pt-[7px] pl-[16px]">
      <Cell className="h-[27px] w-[20px]">
        <circle cx="11.500" cy="8" r="5.500" stroke={L} strokeWidth="2.200" />
        <path d="M7.500 12.500L1 19" stroke={L} strokeWidth="3.200" />
      </Cell>
      <Cell className="h-[27px] w-[20px]">
        <path d="M7 2h5v5H7zM13 2h5v5h-5zM13 8h5v5h-5z" fill={T} />
        <circle cx="8" cy="11" r="4" fill="#444444" stroke={L} strokeWidth="2" />
        <path d="M5 14l-4 4" stroke={L} strokeWidth="2.600" />
      </Cell>
      <Cell className="h-[27px] w-[20px]">
        <path d="M1 6V2h4M14 2h4v4M18 14v4h-4M5 18H1v-4" stroke={L} strokeWidth="1.600" />
        <path d="M9.500 3l6.500 3.500v8L9.500 18 3 14.500v-8z" fill={T} />
        <path d="M3.500 7l6 3 6-3M9.500 10v7" stroke="#2a5c5c" />
        <Fly x={22} y={23} />
      </Cell>
      <Cell className="h-[27px] w-[20px]">
        <path d="M9 4.500l4.500-2.500 4 2v10l-4 2.500L9 14z" fill={T} />
        <path d="M0 12l3.500-3L7 12l-3.500 3zM5 16l3.500-3 3.500 3-3.500 3zM4 9l3-2.500L9 8v3z" fill={L} />
        <path d="M13.500 6.500V16M9 5l4.500 2 4-2.500" stroke="#2a7c7c" />
        <Fly x={21} y={23} />
      </Cell>
      <Cell className="h-[27px] w-[20px]">
        <path d="M2 3l13 7.500L2 18M10 7c2.500 2 2.500 5 0 7" stroke={L} strokeWidth="2" />
        <Fly x={22} y={23} />
      </Cell>
      <Cell className="h-[27px] w-[20px]">
        <path
          d="M3.500 13V5M6.700 12V2.500M10 12V2M13 12V4M1.500 11l4 5M16 9l-3 6"
          stroke={L}
          strokeWidth="2.300"
          strokeLinecap="round"
        />
        <path d="M2.500 10h12v5l-2.500 4H7z" fill={L} />
        <Fly x={22} y={23} />
      </Cell>
      <Cell className="h-[27px] w-[20px]">
        <circle cx="8" cy="9" r="6.800" fill={L} />
        <path d="M8 2.200V9H1.200A6.800 6.800 0 0 1 8 2.200z" fill={T} />
        <path d="M0 17c8 1 15-6 17.500-14" stroke="#444444" strokeWidth="4" />
        <path d="M0 17c8 1 15-6 17.500-14" stroke={L} strokeWidth="2" />
        <Fly x={22} y={23} />
      </Cell>
      <Cell className="h-[27px] w-[20px]">
        <rect x="0" y="2" width="17" height="17" fill={L} />
        <path d="M2 10.500h6.500v6.500H2z" fill="#3a3a3a" />
        <path d="M8.500 10.500l5-5M9.500 4.500H15V10" stroke="#3a3a3a" strokeWidth="1.800" />
      </Cell>
    </div>
  </div>
);

/* ---------- pop-up menus ---------- */

const fileMenu = [
  ["&New", "", true],
  ["&Reset"],
  ["&Open...", "Ctrl+O"],
  ["Open Recen&t", "", true],
  ["&View Image File..."],
  null,
  ["&Save", "Ctrl+S"],
  ["Save &As..."],
  ["Save &Copy As..."],
  ["Save Selecte&d...", "", false, "off"],
  ["Arc&hive..."],
  null,
  ["&Import", "", true],
  ["&Export", "", true],
  ["&Send to", "", true],
  ["&Reference", "", true, "on"],
  null,
  ["Set Project Folder..."],
  null,
  ["S&ummary Info..."],
  ["File &Properties..."],
  ["&Preferences..."],
  null,
  ["E&xit"],
];

const FileMenu = () => (
  <div className="absolute top-[18px] left-0 h-[551px] w-[240px] border border-[#383838] bg-[#505050] text-[12px] text-[#f2f2f2] shadow-[3px_3px_3px_rgba(0,0,0,0.5)]">
    <Grip className="mx-[2px] mt-[3px] mb-[11px]" />
    {fileMenu.map((m, i) =>
      m === null ? (
        <div key={i} className="mx-[3px] h-[4px] border-t border-[#666666]" />
      ) : (
        <div
          key={i}
          className={`mb-[3px] flex h-[24px] items-center pl-[30px] leading-[13px] ${
            m[3] === "on" ? "bg-[#5f8ac1]" : m[3] === "off" ? "text-[#8a8a8a]" : ""
          }`}
        >
          <span className="grow pt-[2px] tracking-[0.4px] whitespace-pre">
            <Mn text={m[0]} />
          </span>
          {m[1] ? <span className="pt-[2px] pr-[25px]">{m[1]}</span> : null}
          {m[2] ? (
            <svg className="mr-[6px] h-[10px] w-[6px]" viewBox="0 0 6 10">
              <path d="M.5 1.500L6 6 .5 10z" fill="#5f8ac1" />
              <path d="M0 0l5 4.500L0 9z" fill="#dddddd" />
            </svg>
          ) : null}
        </div>
      )
    )}
  </div>
);

const subMenu = [
  ["Inherit Container", "", "container"],
  ["XRef O&bjects...", "", "on"],
  ["XRef S&cenes..."],
  ["Manage Links..."],
  ["Asset Trackin&g...", "Shift+T", "asset"],
];

const ReferenceMenu = () => (
  <div className="absolute top-[392px] left-[242px] h-[153px] w-[265px] border border-[#383838] bg-[#505050] text-[12px] text-[#f2f2f2] shadow-[3px_3px_3px_rgba(0,0,0,0.5)]">
    <Grip className="mx-[2px] mt-[3px] mb-[11px]" />
    {subMenu.map(([text, key, kind]) => (
      <div
        key={text}
        className={`mb-[3px] flex h-[24px] items-center leading-[13px] ${kind === "on" ? "bg-[#5f8ac1]" : ""}`}
      >
        <Cell className="h-[24px] w-[30px]">
          {kind === "container" && (
            <>
              <path d="M8 7V3.500h16v14M8 16v3.500h9" stroke="#a9a9a9" strokeWidth="1.300" />
              <path d="M7 10.800h6V8l4.500 4-4.500 4v-2.800H7z" fill="#d8d8d8" />
              <path d="M17 14h8v2h-8zM18 17h7v5h-7z" fill="#f5ab10" />
              <path d="M20 18.500h3" stroke="#6a4a00" />
            </>
          )}
          {kind === "asset" && (
            <>
              <rect x="7" y="3" width="18" height="17" fill="#d5d5d5" />
              <path d="M8 4h2v2H8zM11 4h2v2h-2zM14 4h2v2h-2z" fill={D} />
              <path d="M7 7.500h18" stroke={D} />
              <rect x="9" y="10" width="14" height="8" fill="#2f8f8e" />
              <path d="M9 12.500h14M9 15.500h14" stroke="#1f5655" />
            </>
          )}
        </Cell>
        <span className="grow pt-[2px] tracking-[0.35px] whitespace-pre">
          <Mn text={text} />
        </span>
        {key ? <span className="pt-[2px] pr-[25px] tracking-[0.15px]">{key}</span> : null}
      </div>
    ))}
  </div>
);

export default function App() {
  return (
    <div className="relative flex h-[996px] w-[1920px] flex-col overflow-hidden bg-[#444444] font-['DejaVu_Sans_Condensed','Noto_Sans',sans-serif]">
      <MenuBar />
      <MainToolbar />
      <Ribbon />
      <div className="flex h-[755px] shrink-0">
        <LayoutTabs />
        <SceneExplorer />
        <Viewports />
        <CommandPanel />
      </div>
      <div className="flex flex-col">
        <TimeSlider />
        <TrackBar />
      </div>
      <StatusBar />
      <div className="flex h-px shrink-0 bg-black">
        <div className="ml-[60px] w-[430px] bg-[#c4c4c4]" />
        <div className="ml-[312px] w-[60px] bg-[#444444]" />
      </div>
      <div className="absolute top-[872px] left-[2px] h-[53px] w-[3px] bg-[repeating-linear-gradient(0deg,#444444_0_1px,transparent_1px_2px),repeating-linear-gradient(90deg,#b4b4b4_0_1px,#444444_1px_2px)]" />
      <FileMenu />
      <ReferenceMenu />
      <div className="absolute top-[463px] left-[318px] h-[20px] w-[87px] border border-[#6a6a6a] bg-white text-center text-[12px] leading-[19px] tracking-[0.4px] whitespace-nowrap text-[#4c4c4c] shadow-[3px_3px_1px_rgba(0,0,0,0.45)]">
        XRef Objects
      </div>
    </div>
  );
}
